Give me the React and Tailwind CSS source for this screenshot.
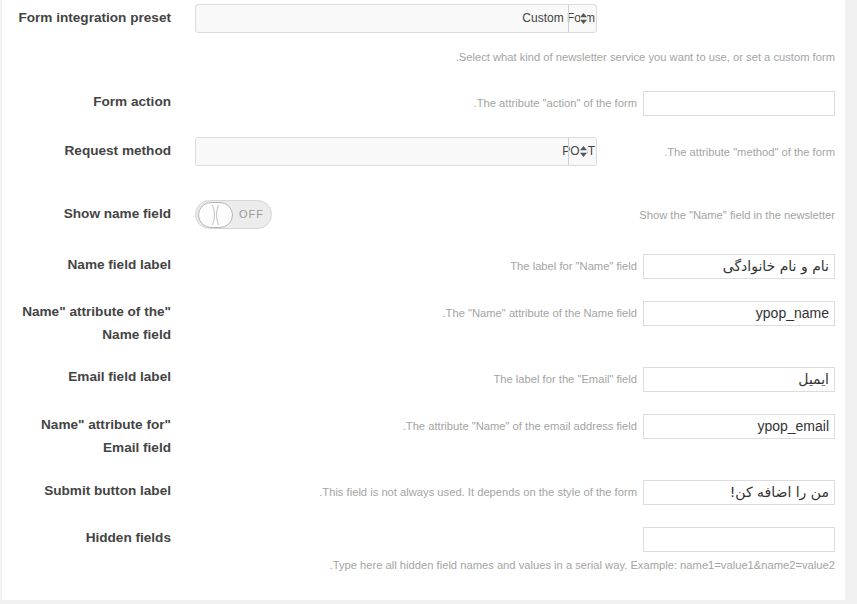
import React from 'react';

const font = { fontFamily: '"Liberation Sans", "DejaVu Sans", sans-serif' };

const Label = ({ children, pt }) => (
  <div className={`w-[169px] shrink-0 text-right text-[13.6px] font-bold leading-[23px] text-[#444] ${pt}`}>
    {children}
  </div>
);

const Desc = ({ children, className = '' }) => (
  <span className={`text-[11.2px] leading-[16px] text-[#a4a4a4] whitespace-nowrap ${className}`}>{children}</span>
);

const Arrows = () => (
  <svg width="7" height="11" viewBox="0 0 7 11">
    <path d="M3.5 0 L7 4.2 L0 4.2 Z" fill="#555" />
    <path d="M3.5 11 L7 6.8 L0 6.8 Z" fill="#555" />
  </svg>
);

const FakeSelect = ({ value }) => (
  <div className="relative h-[29px] w-[402px] rounded-[3px] border border-[#dcdcdc] bg-[#f9f9f9] pr-[1px] text-right text-[12px] leading-[27px] text-[#444]">
    {value}
    <span className="absolute top-0 bottom-0 left-[372px] w-px bg-[#d0d0d0]" />
    <span className="absolute top-0 bottom-0 left-[384px] flex w-[7px] items-center justify-center bg-[#f9f9f9]">
      <Arrows />
    </span>
  </div>
);

const TextInput = ({ value = '', persian = false }) => (
  <div
    className={`h-[25px] w-[192px] shrink-0 border border-[#dcdcdc] bg-white pr-[5px] text-right text-[14px] leading-[23px] text-[#333]`}
    dir={persian ? 'rtl' : 'ltr'}
    style={persian ? { fontFamily: '"DejaVu Sans", "Noto Sans", sans-serif' } : undefined}
  >
    {value}
  </div>
);

const InputRow = ({ label, labelPt = 'pt-[8px]', h, desc, value, persian }) => (
  <div className={`flex ${h}`}>
    <Label pt={labelPt}>{label}</Label>
    <div className="ml-[24px] flex flex-1 items-center justify-end self-start pt-[9px]">
      {desc && <Desc className="mr-[6px] mb-[2px]">{desc}</Desc>}
      <TextInput value={value} persian={persian} />
    </div>
  </div>
);

const Toggle = () => (
  <div className="flex h-[29px] w-[77px] items-center rounded-full border border-[#d6d6d6] bg-[#ececec] pl-[2px]">
    <svg width="35" height="26" viewBox="0 0 35 26">
      <rect x="0.5" y="0.5" width="34" height="25" rx="12.5" fill="#fdfdfd" stroke="#b5b5b5" />
      <path d="M14.5 3 Q18.5 13 14.5 23" stroke="#c2c2c2" fill="none" />
      <path d="M20.5 3 Q16.5 13 20.5 23" stroke="#c2c2c2" fill="none" />
    </svg>
    <span className="ml-[6px] text-[11px] tracking-[1px] text-[#9a9a9a]">OFF</span>
  </div>
);

export default function App() {
  return (
    <div className="h-[604px] w-[857px] bg-[#f1f1f1]" style={font}>
      <div className="ml-[2px] h-[600px] w-[843px] bg-white pr-[10px]">
        <div className="flex h-[82px]">
          <Label pt="pt-[6px]">Form integration preset</Label>
          <div className="ml-[24px] flex flex-1 flex-col pt-[4px]">
            <FakeSelect value="Custom Form" />
            <Desc className="mt-[16px] text-right">.Select what kind of newsletter service you want to use, or set a custom form</Desc>
          </div>
        </div>

        <InputRow h="h-[46px]" label="Form action" desc={'.The attribute "action" of the form'} />

        <div className="flex h-[64px]">
          <Label pt="pt-[11px]">Request method</Label>
          <div className="ml-[24px] flex flex-1 items-center justify-between self-start pt-[9px]">
            <FakeSelect value="POST" />
            <Desc>{'.The attribute "method" of the form'}</Desc>
          </div>
        </div>

        <div className="flex h-[53px]">
          <Label pt="pt-[10px]">Show name field</Label>
          <div className="ml-[24px] flex flex-1 items-center justify-between self-start pt-[8px]">
            <Toggle />
            <Desc>{'Show the "Name" field in the newsletter'}</Desc>
          </div>
        </div>

        <InputRow h="h-[47px]" label="Name field label" desc={'The label for "Name" field'} value="نام و نام خانوادگی" persian />
        <InputRow
          h="h-[66px]"
          label={<>Name" attribute of the"<br />Name field</>}
          desc={'.The "Name" attribute of the Name field'}
          value="ypop_name"
        />
        <InputRow h="h-[47px]" labelPt="pt-[7px]" label="Email field label" desc={'The label for the "Email" field'} value="ایمیل" persian />
        <InputRow
          h="h-[66px]"
          label={<>Name" attribute for"<br />Email field</>}
          desc={'.The attribute "Name" of the email address field'}
          value="ypop_email"
        />
        <InputRow h="h-[47px]" label="Submit button label" desc=".This field is not always used. It depends on the style of the form" value="من را اضافه کن!" persian />

        <div className="flex">
          <Label pt="pt-[8px]">Hidden fields</Label>
          <div className="ml-[24px] flex flex-1 flex-col items-end pt-[9px]">
            <TextInput />
            <Desc className="mt-[5px]">.Type here all hidden field names and values in a serial way. Example: name1=value1&amp;name2=value2</Desc>
          </div>
        </div>
      </div>
    </div>
  );
}
